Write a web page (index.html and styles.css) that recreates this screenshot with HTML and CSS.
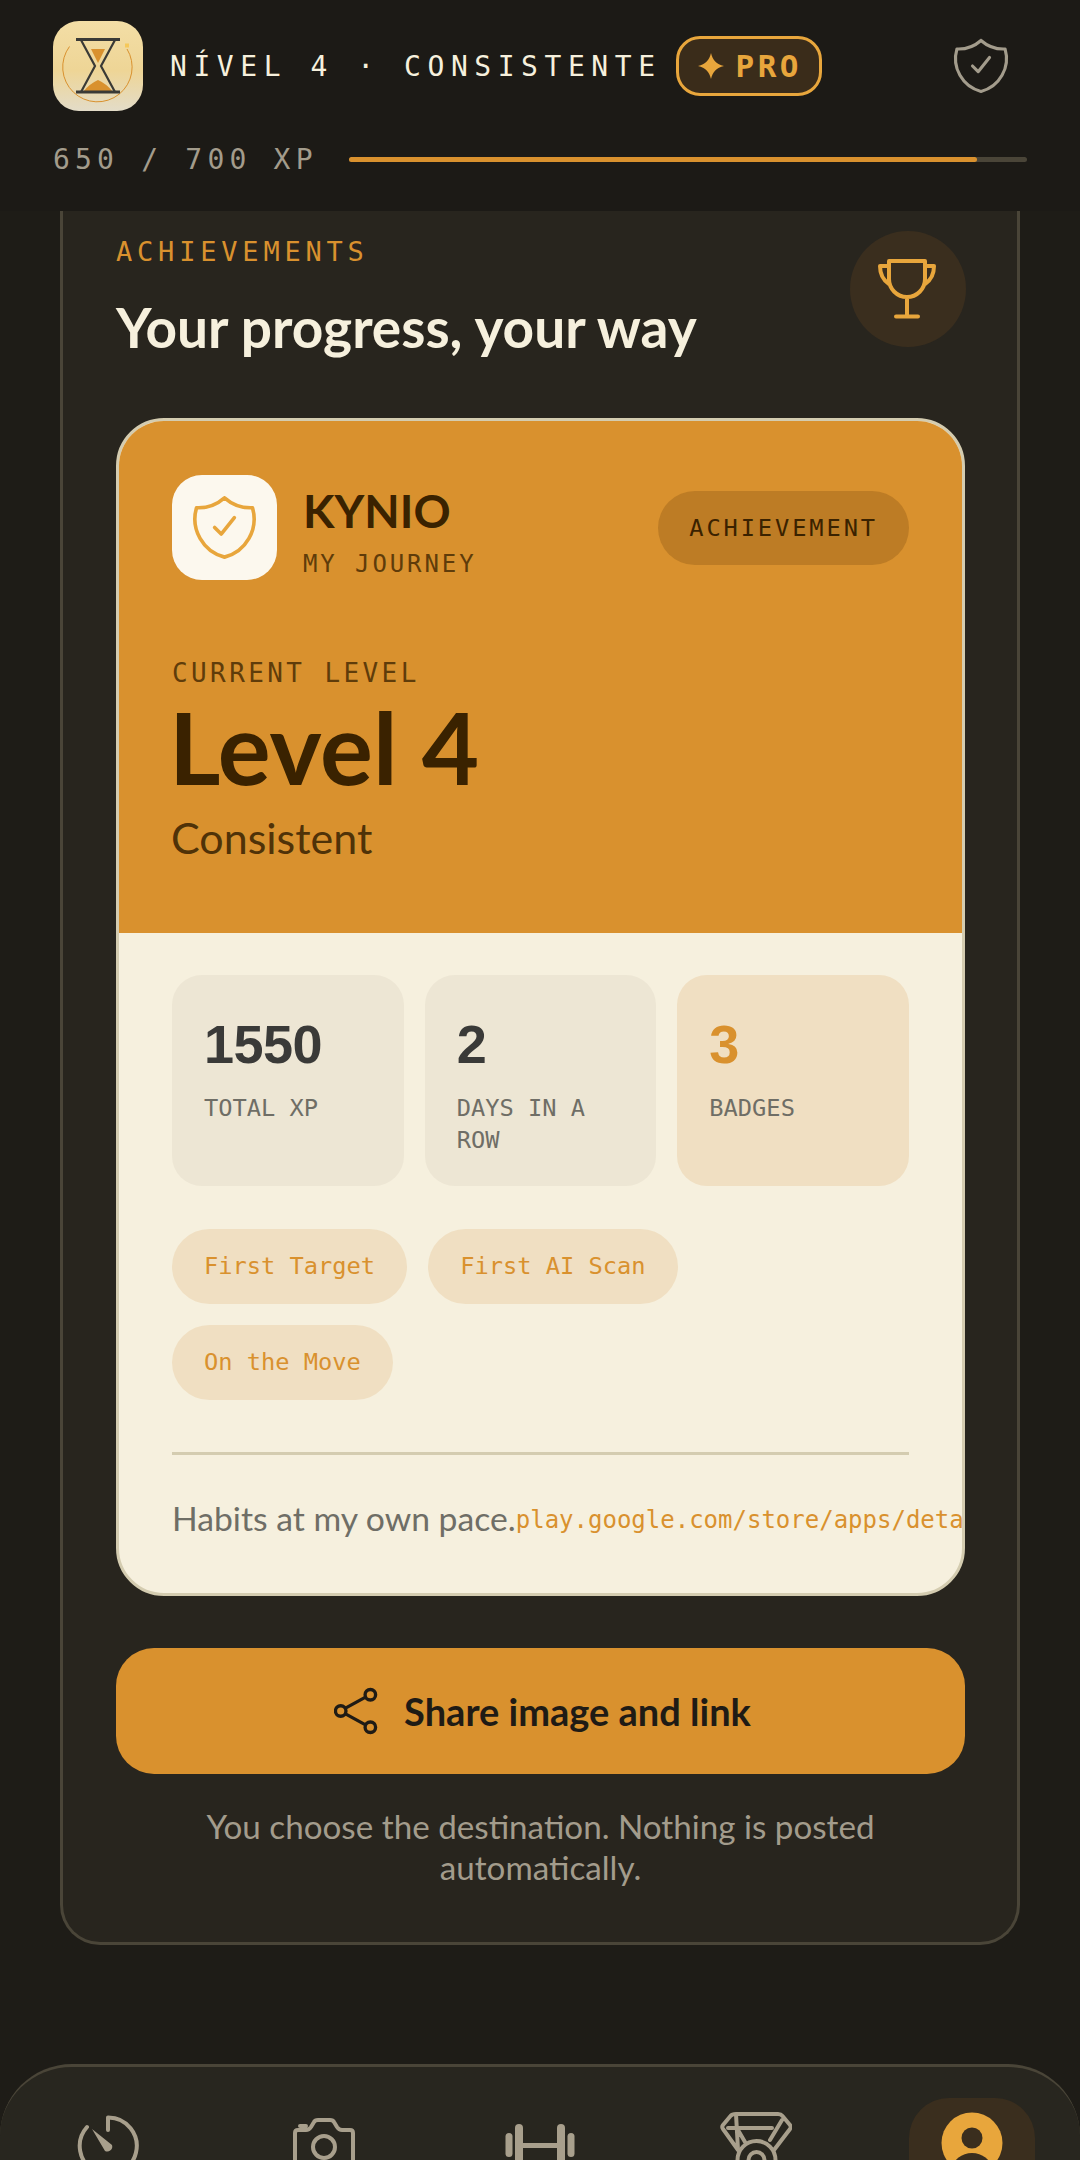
FILE: index.html
```html
<!DOCTYPE html>
<html lang="en">
<head>
  <meta charset="UTF-8" />
  <meta name="viewport" content="width=device-width, initial-scale=1.0"/>
  <title>Kynio</title>
  <link rel="stylesheet" href="styles.css">
</head>
<body>

  <header class="topbar">
    <div class="topbar-row">
      <div class="app-logo">
        <svg viewBox="0 0 90 90" width="90" height="90">
          <path d="M74 28A34.7 34.7 0 1 1 16.5 25.5" fill="none" stroke="#d9912e" stroke-width="1"/>
          <rect x="72" y="22.5" width="4" height="4" fill="#f5c85a"/>
          <path d="M38 28H52L45 42Z" fill="#d9912e"/>
          <path d="M30 71Q36 63 45 59Q54 63 60 71Z" fill="#d9912e"/>
          <path d="M28 19L42 45L28 71M62 19L48 45L62 71" fill="none" stroke="#3a3a36" stroke-width="2.2"/>
          <path d="M23 18.5H67M23 71H67" fill="none" stroke="#3a3a36" stroke-width="3"/>
        </svg>
      </div>
      <div class="level-name">NÍVEL 4 · CONSISTENTE</div>
      <div class="pro-badge">
        <svg viewBox="0 0 24 24" width="26" height="26"><path d="M12 0C13.500 6.500 17 10.500 24 12C17 13.500 13.500 17.500 12 24C10.500 17.500 7 13.500 0 12C7 10.500 10.500 6.500 12 0Z" fill="#e8a63c"/></svg>
        <span>PRO</span>
      </div>
      <svg class="top-shield" viewBox="0 0 24 24" width="68" height="68">
        <path d="M12 3a12 12 0 0 0 8.5 3a12 12 0 0 1 -8.5 15a12 12 0 0 1 -8.5 -15a12 12 0 0 0 8.5 -3" />
        <path class="top-shield-check" d="M9 12l2 2l4 -5" />
      </svg>
    </div>
    <div class="xp-row">
      <span class="xp-text">650 / 700 XP</span>
      <div class="xp-track"><div class="xp-fill" style="width:92.6%"></div></div>
    </div>
  </header>

  <main class="content">
    <section class="panel">
      <div class="panel-head">
        <div>
          <div class="eyebrow">ACHIEVEMENTS</div>
          <h1 class="panel-title">Your progress, your way</h1>
        </div>
        <div class="trophy">
          <svg viewBox="0 0 60 60" width="60" height="60">
            <path d="M11 2h36v18a18 18 0 0 1-36 0zM11 7H2c0 8 3 14 9 18M47 7h9c0 8-3 14-9 18M29 38v19M18 57.500h22"/>
          </svg>
        </div>
      </div>

      <article class="share-card">
        <div class="card-top">
          <div class="brand-row">
            <div class="brand-icon">
              <svg viewBox="0 0 24 24" width="79" height="79">
                <path d="M12 3a12 12 0 0 0 8.500 3a12 12 0 0 1 -8.500 15a12 12 0 0 1 -8.500 -15a12 12 0 0 0 8.500 -3"/>
                <path d="M9 12l2 2l4 -5"/>
              </svg>
            </div>
            <div class="brand-text">
              <div class="brand-name">KYNIO</div>
              <div class="brand-sub">MY JOURNEY</div>
            </div>
            <div class="card-tag">ACHIEVEMENT</div>
          </div>
          <div class="level-label">CURRENT LEVEL</div>
          <div class="level-big">Level 4</div>
          <div class="level-sub">Consistent</div>
        </div>

        <div class="card-body">
          <div class="stats">
            <div class="stat">
              <div class="stat-value">1550</div>
              <div class="stat-label">TOTAL XP</div>
            </div>
            <div class="stat">
              <div class="stat-value">2</div>
              <div class="stat-label">DAYS IN A ROW</div>
            </div>
            <div class="stat stat-accent">
              <div class="stat-value">3</div>
              <div class="stat-label">BADGES</div>
            </div>
          </div>
          <div class="chips">
            <span class="chip">First Target</span>
            <span class="chip">First AI Scan</span>
            <span class="chip">On the Move</span>
          </div>
          <div class="card-foot">
            <span class="foot-text">Habits at my own pace.</span><span class="foot-link">play.google.com/store/apps/details?id=app.kynio</span>
          </div>
        </div>
      </article>

      <button class="share-btn">
        <svg viewBox="0 0 46 48" width="44" height="48">
          <circle cx="7" cy="24" r="5.500"/><circle cx="38" cy="7" r="5.500"/><circle cx="38" cy="41" r="5.500"/>
          <path d="M12 21L33 9.500M12 27L33 38.500"/>
        </svg>
        <span>Share image and link</span>
      </button>
      <p class="share-note">You choose the destination. Nothing is posted automatically.</p>
    </section>
  </main>

  <nav class="bottom-nav">
    <div class="nav-item">
      <svg class="nav-icon" viewBox="0 0 64 64" width="64" height="64">
        <path d="M32 5.500A28.500 28.500 0 1 1 11 15M32 5.500V18"/>
        <path class="nav-fill" d="M16 17L36 33A5 5 0 0 1 29 39Z"/>
      </svg>
    </div>
    <div class="nav-item">
      <svg class="nav-icon" viewBox="0 0 64 64" width="64" height="64">
        <path d="M3 64V21q0-3 3-3h8q3 0 5-3l3-5q1-2 4-2h12q3 0 4 2l3 5q2 3 5 3h8q3 0 3 3V64M8 14h6"/>
        <circle cx="32" cy="35" r="11"/>
      </svg>
    </div>
    <div class="nav-item">
      <svg class="nav-fill" viewBox="0 0 76 64" width="76" height="64">
        <rect x="3.500" y="21" width="7" height="24" rx="3.500"/>
        <rect x="13" y="12" width="8" height="48" rx="4"/>
        <rect x="17" y="31" width="42" height="5"/>
        <rect x="55" y="12" width="8" height="48" rx="4"/>
        <rect x="65.500" y="21" width="7" height="24" rx="3.500"/>
      </svg>
    </div>
    <div class="nav-item">
      <svg class="nav-icon" viewBox="0 0 72 64" width="72" height="64">
        <path d="M16 2H58Q61 2 62.500 4L70 13Q71.500 15 70 17L54 38M18 38L3 17Q1.500 15 3 13L10.500 4Q12 2 16 2ZM8 16H52M62 8L50 28M18 18L25 30"/>
        <circle cx="36.500" cy="48" r="19"/>
        <circle cx="36.500" cy="48" r="8"/>
      </svg>
    </div>
    <div class="nav-item">
      <div class="nav-active">
        <svg viewBox="0 0 62 62" width="62" height="62">
          <circle cx="31" cy="31" r="30.500" fill="#e8a63c"/>
          <circle cx="31" cy="26" r="10.500" fill="#3a2e1e"/>
          <ellipse cx="31" cy="56" rx="19" ry="15" fill="#3a2e1e"/>
        </svg>
      </div>
    </div>
  </nav>

</body>
</html>
```
FILE: styles.css
```css
* {
  box-sizing: border-box;
}
html, body {
  margin: 0;
  padding: 0;
}
body {
  width: 1080px;
  height: 2160px;
  overflow: hidden;
  display: flex;
  flex-direction: column;
  background: #1e1c17;
  font-family: Lato, sans-serif;
  color: #f6f0dd;
}

/* top bar */
.topbar {
  height: 211px;
  flex-shrink: 0;
  padding: 21px 53px 0;
  background: #1c1a16;
}
.topbar-row {
  display: flex;
  align-items: center;
  height: 90px;
}
.app-logo {
  width: 90px;
  height: 90px;
  border-radius: 26px;
  background: linear-gradient(180deg, #f3dea6 0%, #eed596 55%, #e3dcc8 100%);
}
.app-logo svg {
  display: block;
}
.level-name {
  margin-left: 27px;
  font-family: "DejaVu Sans Mono", monospace;
  font-size: 28px;
  letter-spacing: 6.550px;
  white-space: nowrap;
  color: #f6f0dd;
}
.pro-badge {
  display: flex;
  align-items: center;
  gap: 12px;
  height: 60px;
  margin-left: 14px;
  padding: 0 17px 0 19px;
  border: 3px solid #e8a63c;
  border-radius: 24px;
  background: #3a2c1a;
  font-family: "DejaVu Sans Mono", monospace;
  font-size: 31px;
  font-weight: 700;
  letter-spacing: 3.400px;
  color: #e8a63c;
}
.top-shield {
  margin-left: auto;
  margin-right: 12px;
  fill: none;
  stroke: #a39c8c;
  stroke-width: 1.100;
  stroke-linecap: round;
  stroke-linejoin: round;
}
.xp-row {
  display: flex;
  align-items: center;
  gap: 31px;
  margin-top: 32px;
}
.xp-text {
  font-family: "DejaVu Sans Mono", monospace;
  font-size: 28px;
  letter-spacing: 5.200px;
  white-space: nowrap;
  color: #a39c8c;
}
.xp-track {
  width: 684px;
  height: 5px;
  border-radius: 3px;
  background: #4a4538;
}
.xp-fill {
  height: 100%;
  border-radius: 3px;
  background: #d9912e;
}

/* scrolled content */
.content {
  flex: 1;
  min-height: 0;
}
.panel {
  height: 1734px;
  margin: 0 60px;
  padding: 25px 52px 0 53px;
  background: #28251e;
  border: 3px solid #4a4538;
  border-top: none;
  border-radius: 0 0 40px 40px;
}
.panel-head {
  display: flex;
  justify-content: space-between;
  align-items: flex-start;
  height: 182px;
}
.eyebrow {
  font-family: "DejaVu Sans Mono", monospace;
  font-size: 27px;
  letter-spacing: 4.800px;
  color: #d9912e;
}
.panel-title {
  margin: 28px 0 0;
  font-size: 55px;
  font-weight: 700;
  line-height: 64px;
  color: #f6f0dd;
}
.trophy {
  display: flex;
  align-items: center;
  justify-content: center;
  width: 116px;
  height: 116px;
  margin-top: -5px;
  margin-right: -1px;
  border-radius: 50%;
  background: #3a2e1e;
}
.trophy svg {
  fill: none;
  stroke: #e8a63c;
  stroke-width: 4;
  stroke-linecap: round;
  stroke-linejoin: round;
}

/* share card */
.share-card {
  height: 1178px;
  border: 3px solid #d4ccb0;
  border-radius: 48px;
  overflow: hidden;
  background: #f6f0de;
}
.card-top {
  height: 512px;
  padding: 54px 53px 0;
  background: #d9912e;
}
.brand-row {
  display: flex;
  align-items: center;
}
.brand-icon {
  display: flex;
  align-items: center;
  justify-content: center;
  width: 105px;
  height: 105px;
  border-radius: 30px;
  background: #fcf8ee;
}
.brand-icon svg {
  fill: none;
  stroke: #e8a63c;
  stroke-width: 1.100;
  stroke-linecap: round;
  stroke-linejoin: round;
}
.brand-text {
  margin-left: 26px;
  padding-top: 6px;
}
.brand-name {
  font-size: 46px;
  font-weight: 700;
  line-height: 56px;
  color: #3a2200;
}
.brand-sub {
  margin-top: 11px;
  font-family: "DejaVu Sans Mono", monospace;
  font-size: 24px;
  letter-spacing: 2.900px;
  color: #5f3c0a;
}
.card-tag {
  margin-left: auto;
  padding: 0 31px;
  height: 74px;
  line-height: 74px;
  border-radius: 37px;
  background: #bd7c25;
  font-family: "DejaVu Sans Mono", monospace;
  font-size: 23.700px;
  letter-spacing: 2.900px;
  color: #3a2200;
}
.level-label {
  margin-top: 78px;
  font-family: "DejaVu Sans Mono", monospace;
  font-size: 26px;
  letter-spacing: 3.400px;
  color: #5f3c0a;
}
.level-big {
  margin-top: 3px;
  margin-left: -3px;
  font-size: 99px;
  font-weight: 700;
  line-height: 112px;
  color: #3a2200;
}
.level-sub {
  margin-top: 10px;
  margin-left: -1px;
  font-size: 43px;
  line-height: 50px;
  color: #4f3208;
}
.card-body {
  padding: 42px 53px 0;
}
.stats {
  display: grid;
  grid-template-columns: repeat(3, 1fr);
  gap: 21px;
}
.stat {
  height: 211px;
  padding: 41px 32px 0;
  border-radius: 30px;
  background: #ede6d4;
}
.stat-accent {
  background: #f0dfc2;
}
.stat-value {
  font-family: "Liberation Sans", sans-serif;
  font-size: 54px;
  font-weight: 700;
  line-height: 56px;
  letter-spacing: -0.500px;
  color: #3a3a38;
}
.stat-accent .stat-value {
  color: #d9912e;
}
.stat-label {
  margin-top: 20px;
  font-family: "DejaVu Sans Mono", monospace;
  font-size: 23.700px;
  line-height: 32px;
  color: #6f6e66;
}
.chips {
  display: flex;
  flex-wrap: wrap;
  gap: 21px;
  margin-top: 43px;
  padding-bottom: 52px;
  border-bottom: 3px solid #d4ccb0;
}
.chip {
  height: 75px;
  line-height: 75px;
  padding: 0 32px;
  border-radius: 38px;
  background: #f0dfc2;
  font-family: "DejaVu Sans Mono", monospace;
  font-size: 23.700px;
  color: #d9912e;
}
.card-foot {
  margin-top: 43px;
  margin-right: -53px;
  white-space: nowrap;
  overflow: hidden;
  line-height: 40px;
}
.foot-text {
  font-size: 33.700px;
  color: #6f6e66;
}
.foot-link {
  font-family: "DejaVu Sans Mono", monospace;
  font-size: 24px;
  vertical-align: 3px;
  color: #d9912e;
}

/* share button */
.share-btn {
  display: flex;
  align-items: center;
  justify-content: center;
  gap: 26px;
  width: 100%;
  height: 126px;
  margin-top: 52px;
  padding: 0 0 0 4px;
  border: none;
  border-radius: 38px;
  background: #d9912e;
  font-family: Lato, sans-serif;
  font-size: 38px;
  font-weight: 700;
  color: #1f1b15;
}
.share-btn svg {
  fill: none;
  stroke: #1f1b15;
  stroke-width: 3.500;
}
.share-note {
  margin: 32px 20px 0;
  font-size: 33.200px;
  line-height: 41px;
  text-align: center;
  color: #a39c8c;
}

/* bottom nav */
.bottom-nav {
  display: grid;
  grid-template-columns: repeat(5, 216px);
  flex-shrink: 0;
  height: 96px;
  overflow: hidden;
  background: #28261f;
  border-top: 3px solid #4a4538;
  border-radius: 72px 72px 0 0;
}
.nav-item {
  display: flex;
  justify-content: center;
  padding-top: 45px;
}
.nav-active {
  width: 126px;
  height: 96px;
  margin-top: -14px;
  padding: 14px 0 0 32px;
  border-radius: 40px 40px 0 0;
  background: #3a2e1e;
}
.nav-icon {
  fill: none;
  stroke: #a89f8c;
  stroke-width: 4;
  stroke-linecap: round;
  stroke-linejoin: round;
}
.nav-fill,
.nav-icon .nav-fill {
  fill: #a89f8c;
  stroke: none;
}
```
